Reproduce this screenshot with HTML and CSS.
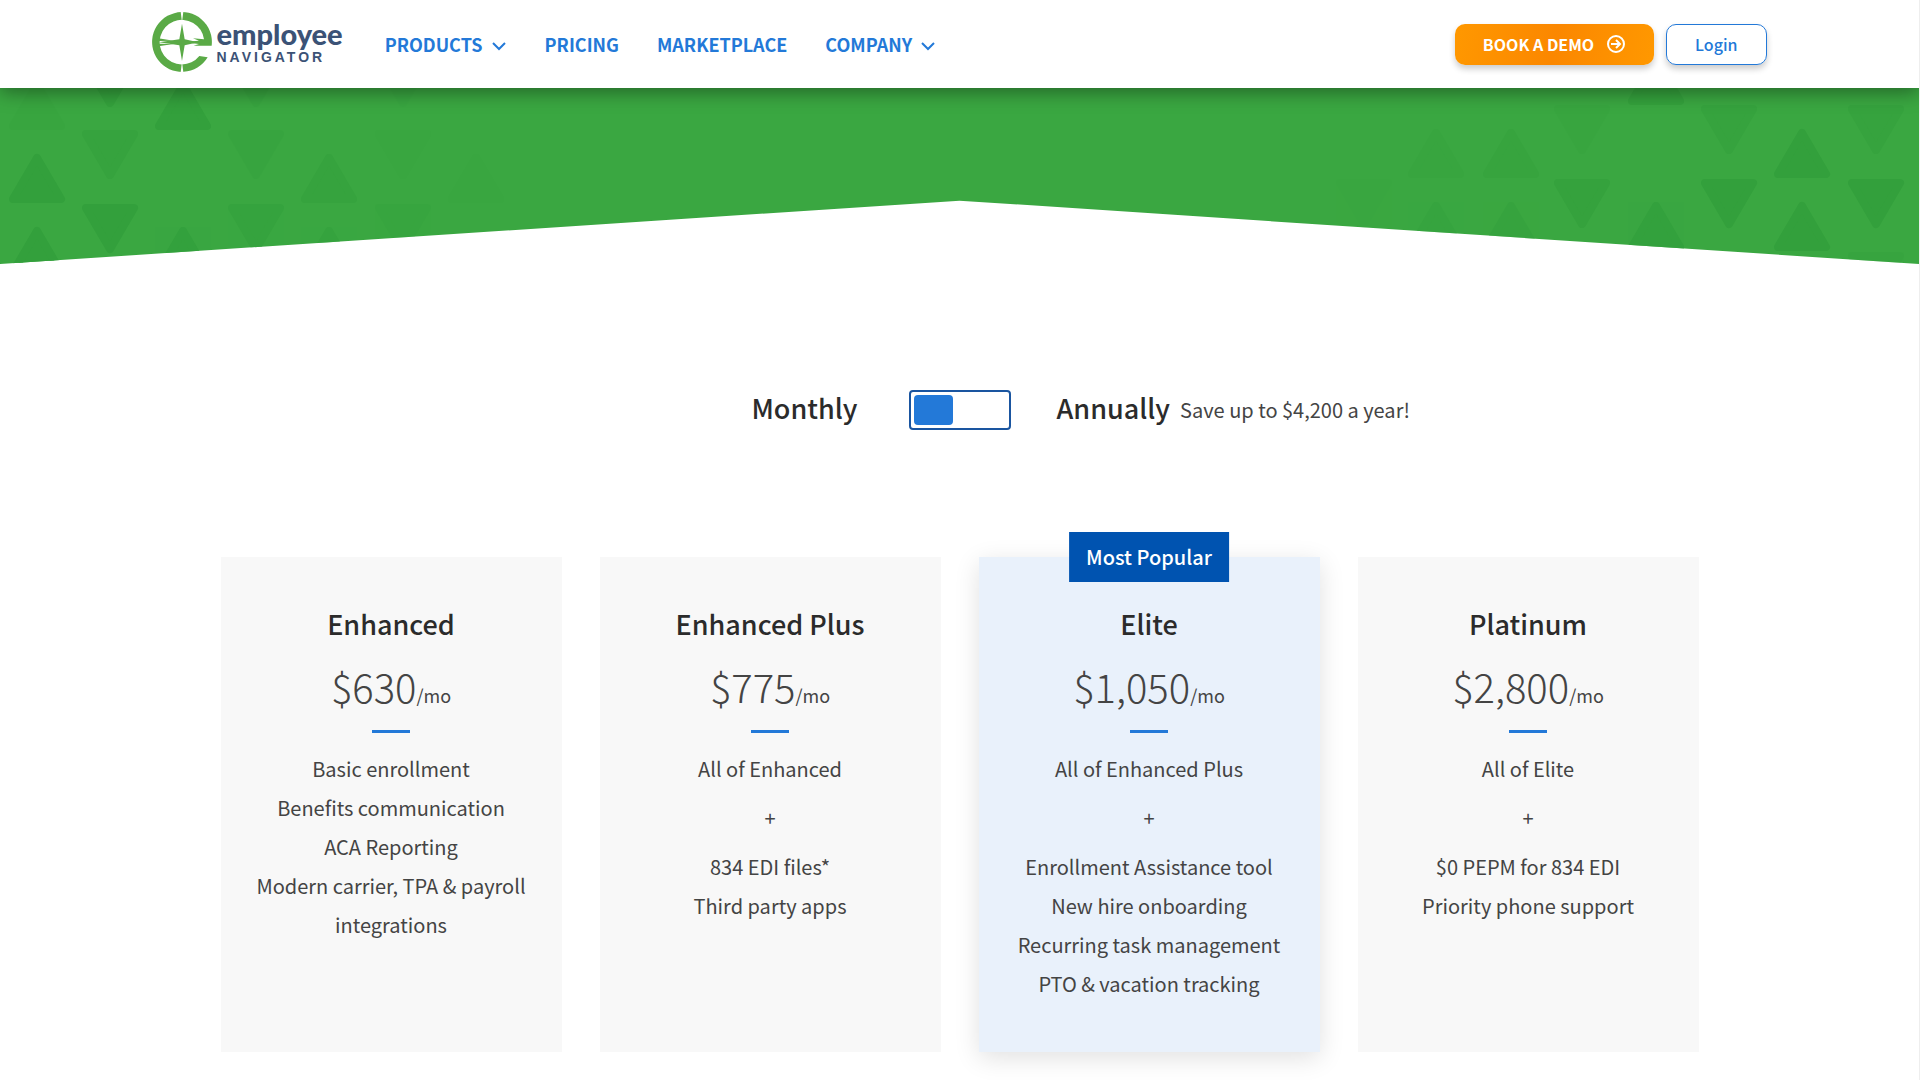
FILE: index.html
```html
<!DOCTYPE html>
<html lang="en">
<head>
<meta charset="utf-8">
<title>Pricing | Employee Navigator</title>
<meta name="viewport" content="width=device-width, initial-scale=1">
<link rel="stylesheet" href="styles.css">
</head>
<body>
<header class="site-header">
  <div class="header-inner">
    <a class="logo" href="#" aria-label="Employee Navigator home">
      <svg class="logo-mark" viewBox="11 11 180 180" aria-hidden="true">
        <path fill="#5aaa46" d="M190 112 A89.7 89.7 0 1 0 178 147 L153 143 A66.8 66.8 0 1 1 167 93 L134 90 L152 97 L132 99 L132 105 L152 107 L136 112 Z"/>
        <path fill="#fff" d="M97 10 H105 L102 34 H100 Z M97 192 H105 L102 168 H100 Z"/>
        <path fill="#5aaa46" d="M101 46 L109 93 L150 102 L109 111 L101 158 L93 111 L32 102 L93 93 Z"/>
        <path fill="#5aaa46" d="M30 90 L76 97 L30 98 Z M30 114 L76 107 L30 106 Z"/>
      </svg>
      <span class="logo-words"><span class="logo-name">employee</span><span class="logo-sub">NAVIGATOR</span></span>
    </a>
    <nav class="main-nav">
      <a href="#">PRODUCTS <svg class="chevron" viewBox="0 0 16 10" aria-hidden="true"><path d="M2 1l6 6 6-6"/></svg></a>
      <a href="#">PRICING</a>
      <a href="#">MARKETPLACE</a>
      <a href="#">COMPANY <svg class="chevron" viewBox="0 0 16 10" aria-hidden="true"><path d="M2 1l6 6 6-6"/></svg></a>
    </nav>
    <div class="actions">
      <a class="btn btn-demo" href="#">BOOK A DEMO
        <svg class="arrow" viewBox="0 0 20 20" aria-hidden="true"><circle cx="10" cy="10" r="8"/><path d="M5 10h9M10 6l4 4-4 4"/></svg>
      </a>
      <a class="btn btn-login" href="#">Login</a>
    </div>
  </div>
</header>
<main>
  <div class="hero" aria-hidden="true">
    <svg class="pattern" viewBox="0 0 520 176">
      <defs>
        <path id="up" d="M0 4 L24 45 H-24 Z"/>
        <path id="down" d="M0 45 L24 4 H-24 Z"/>
      </defs>
      <use href="#up" x="37" y="-7" opacity=".2"/><use href="#down" x="110" y="-30" opacity=".8"/>
      <use href="#up" x="183" y="-7" opacity=".9"/><use href="#down" x="256" y="-30" opacity=".3"/>
      <use href="#down" x="403" y="-30" opacity=".15"/>
      <use href="#up" x="37" y="66"/><use href="#down" x="110" y="42" opacity=".5"/>
      <use href="#down" x="256" y="42" opacity=".3"/><use href="#up" x="329" y="66" opacity=".5"/>
      <use href="#down" x="403" y="42" opacity=".1"/><use href="#up" x="476" y="66" opacity=".1"/>
      <use href="#up" x="37" y="139"/><use href="#down" x="110" y="116"/>
      <use href="#up" x="183" y="139" opacity=".8"/><use href="#down" x="256" y="116" opacity=".6"/>
      <use href="#up" x="329" y="139" opacity=".6"/><use href="#down" x="403" y="116" opacity=".25"/>
    </svg>
    <svg class="pattern" viewBox="0 0 599 176">
      <use href="#up" x="336" y="-32" opacity=".8"/><use href="#down" x="262" y="17" opacity=".2"/>
      <use href="#down" x="409" y="17" opacity=".5"/><use href="#down" x="556" y="17" opacity=".5"/>
      <use href="#up" x="116" y="41" opacity=".25"/><use href="#up" x="191" y="41" opacity=".4"/>
      <use href="#up" x="482" y="41"/><use href="#down" x="44" y="91" opacity=".1"/>
      <use href="#down" x="262" y="91" opacity=".7"/><use href="#down" x="409" y="91"/>
      <use href="#down" x="556" y="91"/><use href="#up" x="116" y="114" opacity=".4"/>
      <use href="#up" x="191" y="114" opacity=".5"/><use href="#up" x="336" y="114" opacity=".8"/>
      <use href="#up" x="482" y="114"/><use href="#down" x="556" y="164" opacity=".3"/>
    </svg>
  </div>
  <form class="billing">
    <label class="period period-left" for="billing">Monthly</label>
    <input class="switch" type="checkbox" id="billing">
    <div class="period-right"><label class="period" for="billing">Annually</label><span class="saving">Save up to $4,200 a year!</span></div>
  </form>
  <section class="plans">
    <article class="plan">
      <h2>Enhanced</h2>
      <p class="price">$630<small>/mo</small></p>
      <ul><li>Basic enrollment</li><li>Benefits communication</li><li>ACA Reporting</li><li>Modern carrier, TPA &amp; payroll integrations</li></ul>
    </article>
    <article class="plan">
      <h2>Enhanced Plus</h2>
      <p class="price">$775<small>/mo</small></p>
      <ul><li>All of Enhanced</li><li class="plus">+</li><li>834 EDI files*</li><li>Third party apps</li></ul>
    </article>
    <article class="plan plan-popular">
      <span class="badge">Most Popular</span>
      <h2>Elite</h2>
      <p class="price">$1,050<small>/mo</small></p>
      <ul><li>All of Enhanced Plus</li><li class="plus">+</li><li>Enrollment Assistance tool</li><li>New hire onboarding</li><li>Recurring task management</li><li>PTO &amp; vacation tracking</li></ul>
    </article>
    <article class="plan">
      <h2>Platinum</h2>
      <p class="price">$2,800<small>/mo</small></p>
      <ul><li>All of Elite</li><li class="plus">+</li><li>$0 PEPM for 834 EDI</li><li>Priority phone support</li></ul>
    </article>
  </section>
</main>
</body>
</html>
```
FILE: styles.css
```css
* { box-sizing: border-box; }

body {
  margin: 0;
  background: #fff;
  border-right: 1px solid #eee;
  color: #444;
  font-family: "Noto Sans CJK SC", "Noto Sans", sans-serif;
  font-size: 20px;
}

a { color: #2379d8; text-decoration: none; }

.site-header {
  position: relative;
  z-index: 1;
  background: #fff;
  box-shadow: 0 4px 18px rgba(0, 0, 0, .4);
}

.header-inner {
  display: flex;
  align-items: center;
  max-width: 1616px;
  height: 88px;
  margin: 0 auto;
}

.logo { display: flex; align-items: center; gap: 5px; margin-right: 42px; padding-bottom: 4px; }
.logo-mark { width: 60px; height: 60px; }
.logo-words { display: flex; flex-direction: column; color: #3b5276; }
.logo-name { font: 900 29px/30px Lato, sans-serif; }
.logo-sub { font: bold 14px/16px "Liberation Sans", sans-serif; letter-spacing: 3px; }

.main-nav { display: flex; gap: 38px; font-size: 18px; font-weight: 700; line-height: 28px; }
.chevron { width: 16px; height: 10px; margin-left: 4px; fill: none; stroke: currentColor; stroke-width: 2; }

.actions { display: flex; gap: 12px; margin-left: auto; padding-right: 1px; }
.btn {
  display: flex;
  align-items: center;
  height: 41px;
  padding: 0 28px;
  border-radius: 10px;
  box-shadow: 0 4px 6px rgba(0, 0, 0, .2);
  font-size: 16px;
  font-weight: 700;
}
.btn-demo { gap: 12px; color: #fff; background: linear-gradient(100deg, #ff9800, #fb8700 50%, #ff9800); }
.btn-login { border: 1px solid #2379d8; font-weight: 500; }
.arrow { width: 20px; height: 20px; fill: none; stroke: currentColor; stroke-width: 2; }

.hero {
  display: flex;
  justify-content: space-between;
  height: 176px;
  background: #3aa741;
  clip-path: polygon(0 0, 100% 0, 100% 100%, 50% 64%, 0 100%);
}
.pattern { flex: none; height: 176px; fill: #33a03c; stroke: #33a03c; stroke-width: 8; stroke-linejoin: round; }

.billing {
  display: grid;
  grid-template-columns: 1fr 102px 1fr;
  align-items: center;
  gap: 46px;
  margin: 122px 0 123px;
}
.period { padding-bottom: 4px; color: #2b2b2b; font-size: 27px; font-weight: 500; line-height: 44px; }
.period-left { justify-self: end; margin-right: 5px; }
.period-right { display: flex; align-items: center; gap: 10px; }
.saving { padding-bottom: 2px; }
.switch {
  appearance: none;
  height: 40px;
  margin: 0;
  padding: 3px;
  border: 2px solid #1a55a0;
  border-radius: 4px;
}
.switch::before { content: ""; display: block; width: 39px; height: 30px; border-radius: 4px; background: #2379d8; }
.switch:checked::before { margin-left: auto; }

.plans {
  display: grid;
  grid-template-columns: repeat(4, 1fr);
  gap: 38px;
  max-width: 1478px;
  margin: 0 auto 29px;
}
.plan { position: relative; padding: 47px 24px 49px; background: #f8f8f8; text-align: center; }
.plan-popular { background: #e9f1fb; box-shadow: 0 6px 24px rgba(0, 0, 0, .12); }
.plan h2 { margin: 0; color: #2b2b2b; font-size: 27px; font-weight: 500; line-height: 40px; }
.price { margin: 14px 0 0; font-size: 40px; font-weight: 300; line-height: 56px; }
.price small { font-size: 18px; font-weight: 400; }
.price::after { content: ""; display: block; width: 38px; height: 3px; margin: 7px auto 0; background: #2379d8; }
.plan ul { margin: 16px 0 0; padding: 0; list-style: none; line-height: 39px; }
.plan .plus { margin: 10px 0; }
.badge {
  position: absolute;
  top: -25px;
  left: 50%;
  transform: translateX(-50%);
  padding: 0 17px;
  background: #0053b0;
  color: #fff;
  font-size: 20px;
  font-weight: 500;
  line-height: 50px;
  white-space: nowrap;
}
```
